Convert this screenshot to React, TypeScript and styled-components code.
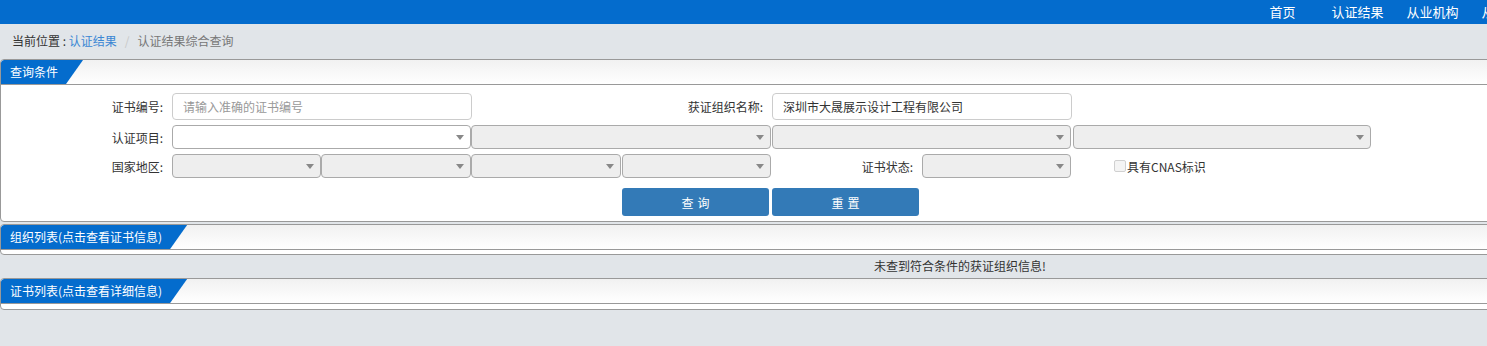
import React from "react";
import styled, { createGlobalStyle } from "styled-components";

const GlobalStyle = createGlobalStyle`
  html, body { margin: 0; padding: 0; overflow: hidden; }
  body {
    background: #e1e5e9;
    font-family: "Noto Sans CJK SC", "Liberation Sans", sans-serif;
    font-size: 12px;
    color: #333;
    width: 1920px;
  }
  * { box-sizing: border-box; }
`;

const TopBar = styled.header`
  height: 24px;
  background: #046ccd;
  display: flex;
  align-items: center;
`;

const NavList = styled.nav`
  display: flex;
  margin-left: 1245px;
`;

const NavItem = styled.a`
  width: 75px;
  text-align: center;
  color: #fff;
  font-size: 13px;
  line-height: 22px;
  text-decoration: none;
  white-space: nowrap;
`;

const Breadcrumb = styled.div`
  height: 35px;
  padding: 0 12px;
  display: flex;
  align-items: center;
  padding-bottom: 2px;
  color: #333;
`;

const CrumbLink = styled.a`
  color: #3a87d4;
  text-decoration: none;
`;

const CrumbSep = styled.span`
  color: #c8c8c8;
  padding: 0 8px;
`;

const CrumbCurrent = styled.span`
  color: #777;
`;

const Panel = styled.section<{ $gap?: number }>`
  background: #fff;
  border: 1px solid #999;
  border-radius: 4px;
  margin-top: ${(p) => p.$gap ?? 0}px;
  overflow: hidden;
`;

const PanelHeader = styled.div`
  height: 25px;
  border-bottom: 1px solid #999;
  background: linear-gradient(to bottom, #f1f1f1, #ffffff);
  display: flex;
`;

const Tab = styled.div`
  height: 24px;
  line-height: 24px;
  padding: 0 25px 0 9px;
  background: #046ccd;
  color: #fff;
  font-size: 12px;
  white-space: nowrap;
  clip-path: polygon(0 0, 100% 0, calc(100% - 17px) 100%, 0 100%);
  border-top-left-radius: 3px;
`;

const PanelBody = styled.div<{ $h: number }>`
  height: ${(p) => p.$h}px;
`;

const FormGrid = styled.div`
  display: grid;
  grid-template-columns: 170px repeat(8, 150px);
  grid-template-rows: 27px 24px 24px 28px;
  row-gap: 5px;
  padding-top: 8px;
  & > :nth-last-child(-n + 2) {
    margin-top: 5px;
  }
`;

const Label = styled.label<{ $span?: number; $pad?: number }>`
  grid-column: span ${(p) => p.$span ?? 1};
  display: flex;
  align-items: center;
  justify-content: flex-end;
  padding-right: ${(p) => p.$pad ?? 8}px;
  color: #333;
  white-space: nowrap;
`;

const TextInput = styled.input<{ $span?: number; $offset?: number }>`
  grid-column: span ${(p) => p.$span ?? 2};
  margin-left: ${(p) => p.$offset ?? 0}px;
  width: 300px;
  height: 27px;
  border: 1px solid #ccc;
  border-radius: 4px;
  padding: 0 10px;
  font-family: inherit;
  font-size: 12px;
  color: #333;
  background: #fff;
  outline: none;
  &::placeholder {
    color: #999;
  }
`;

const SelectBox = styled.div<{ $span?: number; $disabled?: boolean; $offset?: number }>`
  grid-column: span ${(p) => p.$span ?? 1};
  margin-left: ${(p) => p.$offset ?? 0}px;
  position: relative;
  height: 24px;
  border: 1px solid #aaa;
  border-radius: 4px;
  background: ${(p) => (p.$disabled ? "#eee" : "#fff")};
  &::after {
    content: "";
    position: absolute;
    right: 6px;
    top: 9px;
    border-left: 4px solid transparent;
    border-right: 4px solid transparent;
    border-top: 5px solid #888;
  }
`;

const CheckLabel = styled.label`
  grid-column: span 2;
  display: flex;
  align-items: center;
  padding-left: 43px;
  color: #333;
  white-space: nowrap;
`;

const FakeCheck = styled.span`
  width: 12px;
  height: 12px;
  border: 1px solid #d0d0d0;
  background: #f4f4f4;
  border-radius: 2px;
  margin-right: 1px;
`;

const Spacer = styled.div<{ $span: number }>`
  grid-column: span ${(p) => p.$span};
`;

const Button = styled.button<{ $offset?: number }>`
  margin-left: ${(p) => p.$offset ?? 0}px;
  width: 147px;
  height: 28px;
  border: none;
  border-radius: 3px;
  background: #337ab7;
  color: #fff;
  font-family: inherit;
  font-size: 12px;
  letter-spacing: 4px;
  padding: 0 0 0 4px;
`;

const Message = styled.div`
  height: 23px;
  line-height: 21px;
  text-align: center;
  color: #333;
`;

export default function App() {
  return (
    <>
      <GlobalStyle />
      <TopBar>
        <NavList>
          <NavItem>首页</NavItem>
          <NavItem>认证结果</NavItem>
          <NavItem>从业机构</NavItem>
          <NavItem>从业人员</NavItem>
        </NavList>
      </TopBar>
      <Breadcrumb>
        当前位置 :&nbsp;<CrumbLink>认证结果</CrumbLink>
        <CrumbSep>/</CrumbSep>
        <CrumbCurrent>认证结果综合查询</CrumbCurrent>
      </Breadcrumb>

      <Panel>
        <PanelHeader>
          <Tab>查询条件</Tab>
        </PanelHeader>
        <PanelBody $h={136}>
          <FormGrid>
            <Label $pad={8}>证书编号:</Label>
            <TextInput $offset={1} placeholder="请输入准确的证书编号" />
            <Label $span={2} $pad={8}>获证组织名称:</Label>
            <TextInput $offset={1} defaultValue="深圳市大晟展示设计工程有限公司" />
            <Spacer $span={2} />

            <Label>认证项目:</Label>
            <SelectBox $span={2} $offset={1} />
            <SelectBox $span={2} $disabled />
            <SelectBox $span={2} $disabled $offset={1} />
            <SelectBox $span={2} $disabled $offset={2} />

            <Label>国家地区:</Label>
            <SelectBox $disabled $offset={1} />
            <SelectBox $disabled />
            <SelectBox $disabled />
            <SelectBox $disabled $offset={1} />
            <Label $pad={8}>证书状态:</Label>
            <SelectBox $disabled $offset={1} />
            <CheckLabel>
              <FakeCheck />
              具有CNAS标识
            </CheckLabel>

            <Spacer $span={4} />
            <Button $offset={1}>查询</Button>
            <Button $offset={1}>重置</Button>
          </FormGrid>
        </PanelBody>
      </Panel>

      <Panel $gap={2}>
        <PanelHeader>
          <Tab>组织列表(点击查看证书信息)</Tab>
        </PanelHeader>
        <PanelBody $h={4} />
      </Panel>

      <Message>未查到符合条件的获证组织信息!</Message>

      <Panel>
        <PanelHeader>
          <Tab>证书列表(点击查看详细信息)</Tab>
        </PanelHeader>
        <PanelBody $h={5} />
      </Panel>
    </>
  );
}
